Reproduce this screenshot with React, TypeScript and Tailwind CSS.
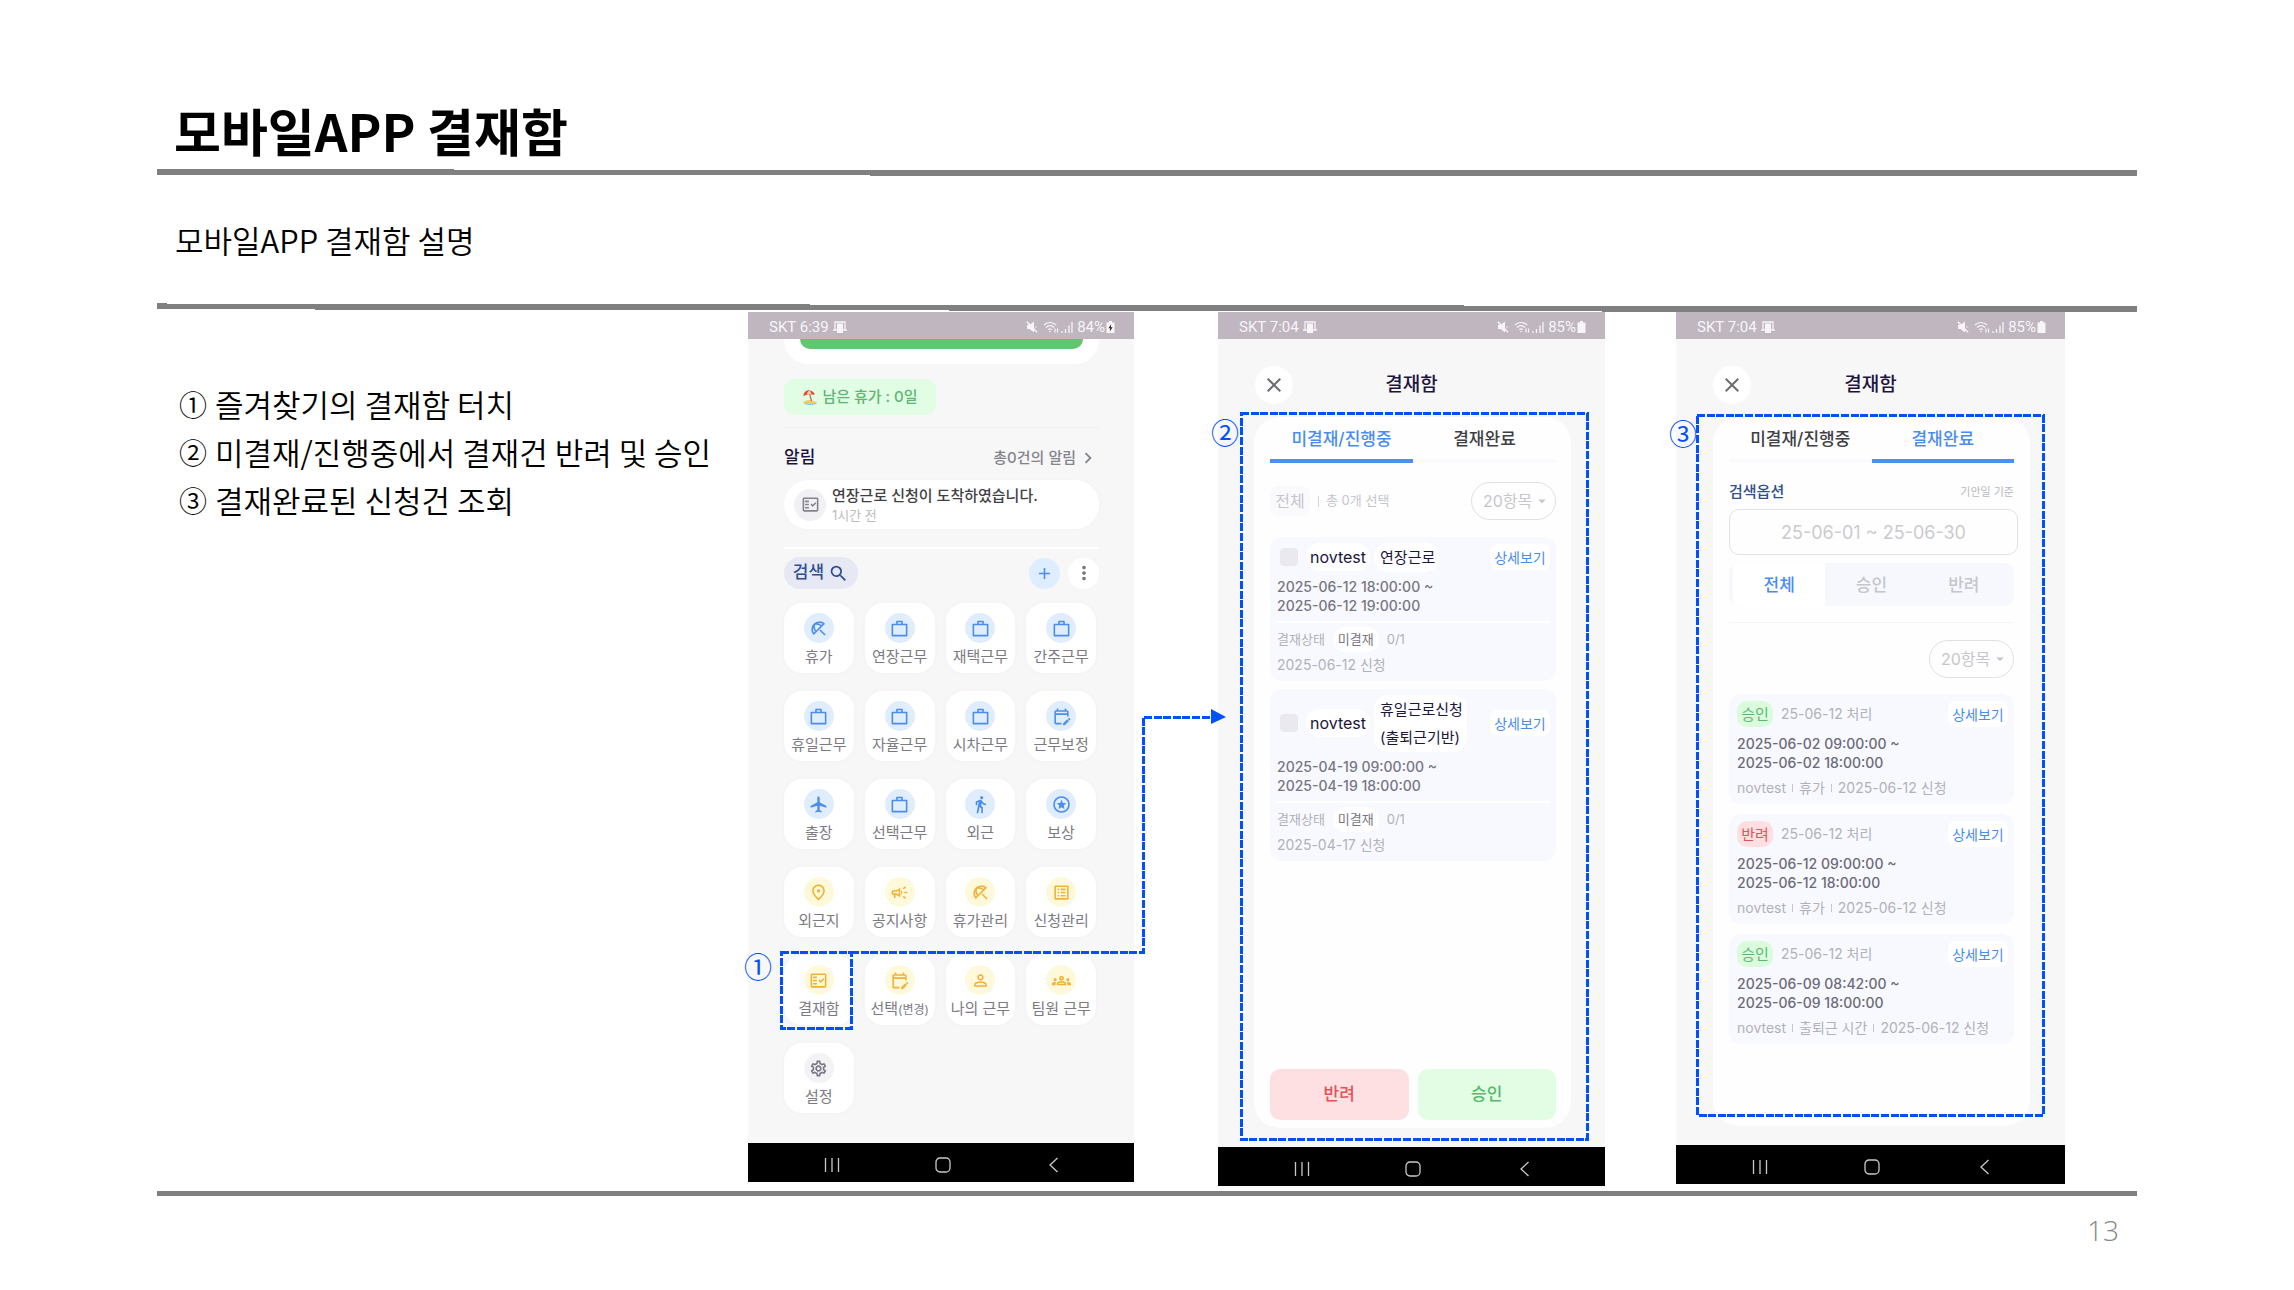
import React, { useState } from "react";
import {
  MdAdd,
  MdAirplanemodeActive,
  MdArrowDropDown,
  MdChevronRight,
  MdClose,
  MdDirectionsWalk,
  MdMoreVert,
  MdOutlineBeachAccess,
  MdOutlineCampaign,
  MdOutlineEditCalendar,
  MdOutlineFactCheck,
  MdOutlineGroups,
  MdOutlineListAlt,
  MdOutlinePlace,
  MdOutlineSettings,
  MdPersonOutline,
  MdSearch,
} from "react-icons/md";

const BagIcon = ({ className }: { className?: string }) => (
  <svg viewBox="0 0 24 24" fill="none" stroke="currentColor" strokeWidth="2" strokeLinejoin="round" className={className}>
    <path d="M3 7h18v14H3zM8.8 7V3.2h6.4V7" />
  </svg>
);

const StarIcon = ({ className }: { className?: string }) => (
  <svg viewBox="0 0 24 24" className={className}>
    <circle cx="12" cy="12" r="9.500" fill="none" stroke="currentColor" strokeWidth="2" />
    <path d="m12 6 1.700 4.100 4.400.4-3.300 2.900 1 4.300-3.800-2.300-3.800 2.300 1-4.300-3.300-2.900 4.400-.4z" fill="currentColor" />
  </svg>
);

const BeachIcon = () => (
  <svg viewBox="0 0 16 16" className="size-4">
    <path d="M1 13.500c3-3 8-3.500 14 .2-2 2-11 2.300-14-.2z" fill="#f9c95c" />
    <path d="M2 14.300c4 1.500 9 1.500 12.500-.3" stroke="#7fd3ef" strokeWidth="1.200" fill="none" />
    <path d="M7.500 4.500 9.500 12" stroke="#a9683a" strokeWidth="1.100" />
    <path d="M1.500 7.200C1.600 3 5 .8 8 1.500c3 .5 5 3 4.500 4.500C10 4.800 5 5 1.500 7.200z" fill="#ee4035" />
    <path d="M5 5.600C5 3.500 6 2 7.300 1.400 8.500 2 9.200 3.500 9.200 5z" fill="#ffd9b0" />
  </svg>
);

type IconType = React.ComponentType<{ className?: string }>;
type Tone = "blue" | "yellow" | "gray";

const menus: { label: string; small?: string; icon: IconType; tone: Tone }[] = [
  { label: "휴가", icon: MdOutlineBeachAccess, tone: "blue" },
  { label: "연장근무", icon: BagIcon, tone: "blue" },
  { label: "재택근무", icon: BagIcon, tone: "blue" },
  { label: "간주근무", icon: BagIcon, tone: "blue" },
  { label: "휴일근무", icon: BagIcon, tone: "blue" },
  { label: "자율근무", icon: BagIcon, tone: "blue" },
  { label: "시차근무", icon: BagIcon, tone: "blue" },
  { label: "근무보정", icon: MdOutlineEditCalendar, tone: "blue" },
  { label: "출장", icon: MdAirplanemodeActive, tone: "blue" },
  { label: "선택근무", icon: BagIcon, tone: "blue" },
  { label: "외근", icon: MdDirectionsWalk, tone: "blue" },
  { label: "보상", icon: StarIcon, tone: "blue" },
  { label: "외근지", icon: MdOutlinePlace, tone: "yellow" },
  { label: "공지사항", icon: MdOutlineCampaign, tone: "yellow" },
  { label: "휴가관리", icon: MdOutlineBeachAccess, tone: "yellow" },
  { label: "신청관리", icon: MdOutlineListAlt, tone: "yellow" },
  { label: "결재함", icon: MdOutlineFactCheck, tone: "yellow" },
  { label: "선택", small: "(변경)", icon: MdOutlineEditCalendar, tone: "yellow" },
  { label: "나의 근무", icon: MdPersonOutline, tone: "yellow" },
  { label: "팀원 근무", icon: MdOutlineGroups, tone: "yellow" },
  { label: "설정", icon: MdOutlineSettings, tone: "gray" },
];

const tones: Record<Tone, string> = {
  blue: "bg-[#e0edfd] text-[#4a8df0]",
  yellow: "bg-[#fff9dc] text-[#f2b134]",
  gray: "bg-[#f3f3f6] text-[#777681]",
};

const pending = [
  {
    type: ["연장근로"],
    from: "2025-06-12 18:00:00 ~",
    to: "2025-06-12 19:00:00",
    applied: "2025-06-12 신청",
  },
  {
    type: ["휴일근로신청", "(출퇴근기반)"],
    from: "2025-04-19 09:00:00 ~",
    to: "2025-04-19 18:00:00",
    applied: "2025-04-17 신청",
  },
];

const finished = [
  { ok: true, type: "휴가", from: "2025-06-02 09:00:00 ~", to: "2025-06-02 18:00:00" },
  { ok: false, type: "휴가", from: "2025-06-12 09:00:00 ~", to: "2025-06-12 18:00:00" },
  { ok: true, type: "출퇴근 시간", from: "2025-06-09 08:42:00 ~", to: "2025-06-09 18:00:00" },
];

function StatusBar({ time, battery, charging }: { time: string; battery: string; charging?: boolean }) {
  return (
    <div className="h-[27px] shrink-0 bg-[#bfb6c0] text-[#f7f5f8] flex items-center justify-between pl-[21px] pr-[19px] pt-[3px] font-['Roboto',sans-serif] text-[15px]">
      <div className="flex items-center gap-x-1">
        <span>SKT {time}</span>
        <svg viewBox="0 0 14 12" className="w-[14px] h-3">
          <path d="M2 8.500V1h10v7.500M0 9h14" fill="none" stroke="currentColor" strokeWidth="1.300" />
          <path d="M4 2.500h6V12H4z" fill="currentColor" />
        </svg>
      </div>
      <div className="flex items-center">
        <svg viewBox="0 0 12 12" className="size-3 mr-[5px]">
          <path d="M1 4h2.500L8 .5v11L3.500 8H1z" fill="currentColor" />
          <path d="M.8.800 11 11.300M9.500 6h1" stroke="currentColor" strokeWidth="1.500" />
        </svg>
        <svg viewBox="0 0 16 12" className="w-4 h-3 mr-[2px]" fill="none" stroke="currentColor" strokeWidth="1.200">
          <path d="M.8 4.200C4 .6 10 .6 13.200 4.200M3 6.500c2.200-2.400 5.800-2.400 8 0M5.200 8.700c1-1.100 2.600-1.100 3.600 0" />
          <circle cx="7" cy="10.500" r=".8" fill="currentColor" stroke="none" />
          <path d="M12 7.500v4M14.500 7.500v4" />
        </svg>
        <svg viewBox="0 0 12 12" className="size-3 mr-1" stroke="currentColor" strokeWidth="1.300">
          <path d="M1 12v-2M4.500 12V8M8 12V4.500M11 12V1" />
        </svg>
        <span>{battery}</span>
        <svg viewBox="0 0 9 12" className="w-[9px] h-3 ml-px" fill="currentColor">
          <path d="M3 0h3v1.500h2.500V12H.5V1.500H3z" />
          {charging && <path d="M5.200 3 2.500 7.200h1.700L3.800 10.500l2.800-4.300H4.800z" fill="#222" />}
        </svg>
      </div>
    </div>
  );
}

function NavBar() {
  return (
    <nav className="h-[39px] shrink-0 bg-black text-[#c9c9c9] flex items-center justify-between pl-[76px] pr-[73px] pt-[5px]">
      <button aria-label="최근 앱">
        <svg viewBox="0 0 16 16" className="size-4" stroke="currentColor" strokeWidth="1.300">
          <path d="M1.500 1v14M8 1v14M14.500 1v14" />
        </svg>
      </button>
      <button aria-label="홈">
        <svg viewBox="0 0 16 16" className="size-4" stroke="currentColor" strokeWidth="1.300" fill="none">
          <rect x="1" y="1" width="14" height="14" rx="4" />
        </svg>
      </button>
      <button aria-label="뒤로">
        <svg viewBox="0 0 16 16" className="size-4" stroke="currentColor" strokeWidth="1.300" fill="none">
          <path d="M12.500 1 5 8l7.500 7" />
        </svg>
      </button>
    </nav>
  );
}

const DashedBox = ({ className }: { className: string }) => (
  <svg className={"absolute pointer-events-none overflow-visible " + className}>
    <rect width="100%" height="100%" fill="none" stroke="#0050ff" strokeWidth="3" strokeDasharray="8 1.600" shapeRendering="crispEdges" />
  </svg>
);

const Mark = ({ className, children }: { className: string; children: string }) => (
  <span className={"absolute font-['Noto_Sans_CJK_KR',sans-serif] text-[28px] leading-7 text-[#0050ff] " + className}>
    {children}
  </span>
);

function HomeScreen() {
  return (
    <div className="relative z-10 w-[386px] shrink-0 h-[870px] flex flex-col bg-[#f7f7f8]">
      <StatusBar time="6:39" battery="84%" charging />
      <div className="flex-1 pl-9 pr-[35px]">
        <div className="h-[25px] bg-white rounded-b-[24px] px-4">
          <div className="h-[10px] bg-[#5ec870] rounded-b-[10px]" />
        </div>
        <div className="mt-[15px] h-9 w-[152px] rounded-[10px] bg-[#e1fde3] flex items-center justify-center gap-x-1 text-[15px] font-medium text-[#5cb673]">
          <BeachIcon />
          남은 휴가 : 0일
        </div>
        <hr className="mt-3 border-[#f1f1f4]" />
        <div className="mt-4 h-7 flex items-center justify-between">
          <h2 className="text-[17px] font-medium text-[#1b1540]">알림</h2>
          <a href="#alarm" className="flex items-center text-[15px] font-medium text-[#85848d]">
            총0건의 알림
            <MdChevronRight className="size-[22px] ml-px" />
          </a>
        </div>
        <div className="mt-2 h-[49px] bg-white rounded-[24px] flex items-center pl-[10px] gap-x-[6px] shadow-[0_0_4px_rgba(0,0,0,0.02)]">
          <div className="size-8 rounded-full bg-[#f1f0f5] flex items-center justify-center">
            <MdOutlineFactCheck className="size-[19px] text-[#85848d]" />
          </div>
          <div>
            <p className="text-[15px] leading-5 font-medium text-[#3f3f46]">연장근로 신청이 도착하였습니다.</p>
            <p className="text-[13px] leading-[18px] text-[#bcbcc2]">1시간 전</p>
          </div>
        </div>
        <hr className="mt-[18px] border-t-2 border-white" />
        <div className="mt-2 h-8 flex items-center">
          <button className="h-8 w-[74px] rounded-full bg-[#e6e8f4] text-[#2f4f8f] text-[17px] font-medium flex items-center justify-center gap-x-1">
            검색
            <MdSearch className="size-[21px]" />
          </button>
          <button aria-label="추가" className="ml-auto size-[31px] rounded-full bg-[#deedff] text-[#4a8df0] flex items-center justify-center">
            <MdAdd className="size-[19px]" />
          </button>
          <button aria-label="더보기" className="ml-2 size-[31px] rounded-full bg-white text-[#77767f] flex items-center justify-center">
            <MdMoreVert className="size-[22px]" />
          </button>
        </div>
        <div className="mt-[14px] mr-[3px] grid grid-cols-4 gap-x-[11px] gap-y-[18px]">
          {menus.map(({ label, small, icon: Icon, tone }) => (
            <button
              key={label}
              className="h-[70px] rounded-[18px] bg-white pt-[10px] flex flex-col items-center whitespace-nowrap shadow-[0_0_5px_rgba(0,0,0,0.03)]"
            >
              <span className={"size-[30px] rounded-full flex items-center justify-center " + tones[tone]}>
                <Icon className="size-[19px]" />
              </span>
              <span className="mt-1 text-[15px] leading-5 text-[#7c7b83]">
                {label}
                {small && <span className="text-xs">{small}</span>}
              </span>
            </button>
          ))}
        </div>
      </div>
      <NavBar />

      <Mark className="left-[-4px] top-[640px]">①</Mark>
      <DashedBox className="left-[33px] top-[640px] w-[70px] h-[76px]" />
      {/* path from the menu tile to the next screen */}
      <svg className="absolute left-[33px] top-[397px] w-[446px] h-[246px] pointer-events-none overflow-visible">
        <path
          d="M70 243H362V8H432"
          fill="none"
          stroke="#0050ff"
          strokeWidth="3"
          strokeDasharray="8 1.600"
          shapeRendering="crispEdges"
        />
        <path d="M430 0 445 8 430 15z" fill="#0050ff" />
      </svg>
    </div>
  );
}

function ApprovalHeader() {
  return (
    <div className="relative mt-[27px] h-[38px] mx-[37px] flex items-center justify-center">
      <button aria-label="닫기" className="absolute left-0 size-[38px] rounded-full bg-white text-[#6d6c75] flex items-center justify-center">
        <MdClose className="size-6" />
      </button>
      <h2 className="pt-px text-[19px] font-medium text-[#1b1540]">결재함</h2>
    </div>
  );
}

function Tabs({ active }: { active: number }) {
  const [tab, setTab] = useState<number>(active);
  return (
    <div role="tablist" className="h-[46px] shrink-0 grid grid-cols-2 text-[17px] font-medium">
      {["미결재/진행중", "결재완료"].map((name, i) => (
        <button
          key={name}
          role="tab"
          aria-selected={tab === i}
          onClick={() => setTab(i)}
          className={
            tab === i
              ? "pt-1 border-b-4 border-[#4f8ff0] text-[#4a8df0]"
              : "pt-1 border-b-4 border-[#fafafd] text-[#3f3f46]"
          }
        >
          {name}
        </button>
      ))}
    </div>
  );
}

function CountSelect() {
  return (
    <div className="relative w-[85px] h-[38px] ml-auto text-[#c6c6cb]">
      <select aria-label="항목 수" className="appearance-none size-full rounded-full border border-[#e0e0e5] bg-transparent pl-[11px] text-base">
        <option>20항목</option>
      </select>
      <MdArrowDropDown className="absolute right-[5px] top-[10px] size-[18px] pointer-events-none" />
    </div>
  );
}

const DetailButton = () => (
  <button className="ml-auto h-[26px] w-[60px] pt-px rounded-lg bg-white text-sm text-[#4a8df0] whitespace-nowrap">상세보기</button>
);

function PendingScreen() {
  return (
    <div className="relative w-[387px] shrink-0 h-[874px] flex flex-col bg-[#f7f7f8]">
      <StatusBar time="7:04" battery="85%" />
      <ApprovalHeader />
      <div className="flex-1 mt-[13px] mb-[19px] ml-9 mr-[34px] bg-[#fefefe] rounded-[26px] pl-4 pr-[15px] pb-2 flex flex-col">
        <Tabs active={0} />
        <div className="mt-[19px] flex items-center text-[#c6c6cd]">
          <button className="h-[30px] w-[40px] rounded-lg bg-[#fafafd] text-base whitespace-nowrap">전체</button>
          <span className="ml-2 mr-[7px] h-[11px] border-l border-[#d4d4da]" />
          <span className="text-[13px] whitespace-nowrap">총 0개 선택</span>
          <CountSelect />
        </div>
        <div className="mt-[17px] flex flex-col gap-y-2">
          {pending.map((item) => (
            <div key={item.applied} className="rounded-xl bg-[#f8f9fe] pt-[6px] pb-1 pl-[7px] pr-[6px]">
              <div className="flex items-center text-[15px] text-[#1b1540]">
                <input type="checkbox" aria-label={item.type[0]} className="appearance-none ml-[3px] size-[18px] rounded bg-[#eae9f0]" />
                <span className="ml-2 rounded-full bg-white px-1 text-base h-7 leading-7">novtest</span>
                <span className="ml-1 rounded-[14px] bg-white pl-[6px] pr-1 pt-px leading-7 whitespace-nowrap -mb-px">
                  {item.type.map((line) => (
                    <span key={line} className="block">{line}</span>
                  ))}
                </span>
                <DetailButton />
              </div>
              <p className="mt-[6px] text-sm leading-[19px] font-medium text-[#777682]">
                {item.from}
                <br />
                {item.to}
              </p>
              <hr className="mt-[6px] border-t-2 border-white" />
              <div className="mt-1 text-[13px] leading-[25px] text-[#b1b1b9]">
                <p className="flex items-center">
                  결재상태
                  <span className="mx-2 px-[5px] rounded-full bg-white text-[#777682]">미결재</span>
                  0/1
                </p>
                <p className="text-sm leading-[25px]">{item.applied}</p>
              </div>
            </div>
          ))}
        </div>
        <div className="mt-auto h-[51px] grid grid-cols-2 gap-x-[9px] text-[17px] font-medium">
          <button className="pt-px rounded-[10px] bg-[#fee0e3] text-[#e45257]">반려</button>
          <button className="pt-px rounded-[10px] bg-[#e2fde3] text-[#58b86b]">승인</button>
        </div>
      </div>
      <NavBar />

      <Mark className="left-[-7px] top-[106px]">②</Mark>
      <DashedBox className="left-[23px] top-[101px] w-[346px] h-[726px]" />
    </div>
  );
}

function FinishedScreen() {
  const [filter, setFilter] = useState<string>("전체");
  const [period, setPeriod] = useState<string>("25-06-01 ~ 25-06-30");
  return (
    <div className="relative w-[389px] shrink-0 h-[872px] flex flex-col bg-[#f7f7f8]">
      <StatusBar time="7:04" battery="85%" />
      <ApprovalHeader />
      <div className="flex-1 mt-[13px] mb-[19px] ml-[37px] mr-[35px] bg-[#fefefe] rounded-[26px] px-4 flex flex-col">
        <Tabs active={1} />
        <div className="mt-4 h-[26px] flex items-center justify-between">
          <label htmlFor="period" className="text-[15px] font-medium text-[#2f4f8f]">검색옵션</label>
          <span className="text-[11px] text-[#b9b9c1]">기안일 기준</span>
        </div>
        <input
          id="period"
          value={period}
          onChange={(e) => setPeriod(e.target.value)}
          className="mt-1 mr-[-4px] h-[46px] shrink-0 rounded-[10px] border border-[#e2e2e6] text-center text-lg text-[#cbcbd0]"
        />
        <div className="mt-2 h-[43px] shrink-0 grid grid-cols-3 px-1 rounded-[10px] bg-[#f6f8fd] text-[17px] font-medium overflow-hidden">
          {["전체", "승인", "반려"].map((name) => (
            <button
              key={name}
              onClick={() => setFilter(name)}
              className={filter === name ? "pt-[3px] bg-white text-[#4a8df0]" : "pt-[3px] text-[#c6c6cd]"}
            >
              {name}
            </button>
          ))}
        </div>
        <hr className="mt-4 mb-[17px] border-[#f5f5f7]" />
        <CountSelect />
        <div className="mt-4 flex flex-col gap-y-[10px]">
          {finished.map((item) => (
            <div key={item.from} className="rounded-xl bg-[#f8f9fe] pt-[6px] pb-1 pl-2 pr-[6px]">
              <div className="h-7 flex items-center">
                <span
                  className={
                    item.ok
                      ? "w-9 h-[26px] rounded-[10px] text-center text-[15px] leading-[27px] bg-[#dbfcdc] text-[#5cb673]"
                      : "w-9 h-[26px] rounded-[10px] text-center text-[15px] leading-[27px] bg-[#fee0e3] text-[#e45257]"
                  }
                >
                  {item.ok ? "승인" : "반려"}
                </span>
                <span className="ml-2 text-sm text-[#b1b1b9]">25-06-12 처리</span>
                <DetailButton />
              </div>
              <p className="mt-[6px] text-sm leading-[19px] font-medium text-[#6b6a78]">
                {item.from}
                <br />
                {item.to}
              </p>
              <p className="mt-[3px] text-sm leading-[25px] text-[#b1b1b9] flex items-center gap-x-[6px] whitespace-nowrap">
                novtest
                <span className="h-2 border-l border-[#c6c6cd]" />
                {item.type}
                <span className="h-2 border-l border-[#c6c6cd]" />
                2025-06-12 신청
              </p>
            </div>
          ))}
        </div>
      </div>
      <NavBar />

      <Mark className="left-[-7px] top-[107px]">③</Mark>
      <DashedBox className="left-[21px] top-[103px] w-[346px] h-[700px]" />
    </div>
  );
}

const notes = [
  { no: "①", text: "즐겨찾기의 결재함 터치" },
  { no: "②", text: "미결재/진행중에서 결재건 반려 및 승인" },
  { no: "③", text: "결재완료된 신청건 조회" },
];

export default function App() {
  return (
    <main className="min-h-screen bg-white px-[157px] text-black font-['Inter','Noto_Sans_CJK_KR',sans-serif]">
      <header className="font-['Noto_Sans_CJK_KR',sans-serif]">
        <h1 className="pt-[98px] h-[169px] pl-[17px] text-[51px] leading-[64px] font-bold">모바일APP 결재함</h1>
        <svg className="block w-full h-[7px]" viewBox="0 0 100 7" preserveAspectRatio="none" shapeRendering="crispEdges">
          <path d="M0 0H15V1H100V7H36V6H0z" fill="#808080" />
        </svg>
        <p className="h-[127px] pt-11 pl-[18px] text-[31px] leading-10 font-[350]">모바일APP 결재함 설명</p>
        <svg className="block w-full h-[9px]" viewBox="0 0 100 9" preserveAspectRatio="none" shapeRendering="crispEdges">
          <path d="M0 0H.5V1H33V2H66V3H100V9H73V8H40V7H8V6H0z" fill="#808080" />
        </svg>
      </header>

      <section className="h-[879px] flex items-start">
        <ol className="flex-1 pt-[72px] pl-[22px] flex flex-col gap-y-2 text-[31px] leading-10 font-[350] font-['Noto_Sans_CJK_KR',sans-serif] whitespace-nowrap">
          {notes.map((note) => (
            <li key={note.no} className="flex items-center">
              <span className="w-9 text-[28px]">{note.no}</span>
              {note.text}
            </li>
          ))}
        </ol>
        <HomeScreen />
        <div className="w-[84px] shrink-0" />
        <PendingScreen />
        <div className="w-[71px] shrink-0" />
        <FinishedScreen />
        <div className="w-[72px] shrink-0" />
      </section>

      <footer className="border-t-[5px] border-[#808080] pt-[14px] pr-[18px] text-right text-[28px] leading-10 font-light text-[#868686] font-['Open_Sans',sans-serif]">
        13
      </footer>
    </main>
  );
}
